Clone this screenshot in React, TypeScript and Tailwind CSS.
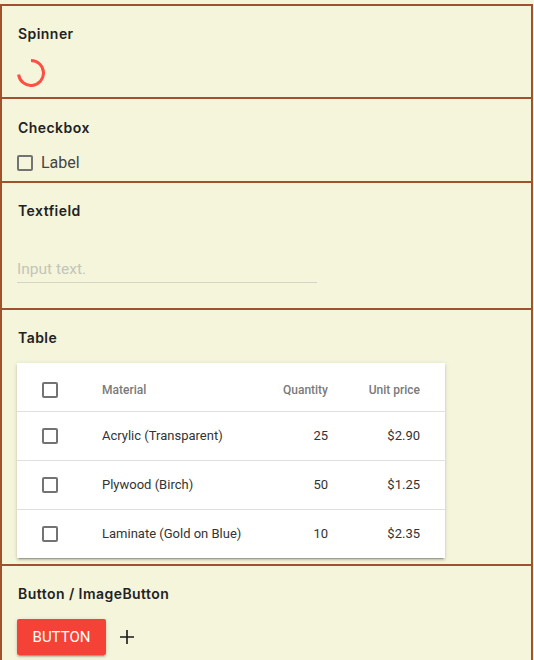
import React from 'react';

const titleFont = { fontFamily: 'Inter, "Noto Sans", sans-serif' };
const bodyFont = { fontFamily: 'Roboto, "Liberation Sans", sans-serif' };

const Box = () => (
  <span className="block w-4 h-4 shrink-0 rounded-[2px] border-2 border-[#737373]" />
);

const Title = ({ children }: { children: React.ReactNode }) => (
  <h3 style={titleFont} className="text-[14px] leading-[20px] font-semibold tracking-[0.45px] text-[#222] pl-px">
    {children}
  </h3>
);

const rows = [
  { material: 'Acrylic (Transparent)', qty: 25, price: '$2.90' },
  { material: 'Plywood (Birch)', qty: 50, price: '$1.25' },
  { material: 'Laminate (Gold on Blue)', qty: 10, price: '$2.35' },
];

export default function App() {
  return (
    <div className="min-h-screen bg-[#f5f5dc] pt-[4px]" style={bodyFont}>
      <div className="w-[533px] border-x-2 border-t-2 border-[#a0522d]">
        {/* Spinner */}
        <section className="h-[93px] border-b-2 border-[#a0522d] px-[15px] pt-[18px]">
          <Title>Spinner</Title>
          <svg className="mt-[15px] block" width="28" height="28" viewBox="0 0 28 28">
            <path
              d="M 14 1.5 A 12.5 12.5 0 1 1 1.6 15.5"
              fill="none"
              stroke="#ff4f44"
              strokeWidth="3"
            />
          </svg>
        </section>

        {/* Checkbox */}
        <section className="h-[84px] border-b-2 border-[#a0522d] px-[15px] pt-[19px]">
          <Title>Checkbox</Title>
          <label className="mt-[15px] flex items-center gap-2 h-5">
            <Box />
            <span className="text-[16px] text-[#444]">Label</span>
          </label>
        </section>

        {/* Textfield */}
        <section className="h-[127px] border-b-2 border-[#a0522d] px-[15px] pt-[18px]">
          <Title>Textfield</Title>
          <input
            placeholder="Input text."
            className="mt-[38px] block w-[300px] h-[24px] pb-[3px] leading-[20px] text-[15.5px] bg-transparent border-b border-[#d5d5c6] outline-none placeholder:text-[#c4c4b8]"
          />
        </section>

        {/* Table */}
        <section className="h-[256px] border-b-2 border-[#a0522d] px-[15px] pt-[18px]">
          <Title>Table</Title>
          <div className="mt-[15px] w-[428px] bg-white shadow-[0_2px_2px_rgba(0,0,0,0.14),0_3px_1px_-2px_rgba(0,0,0,0.2),0_1px_5px_rgba(0,0,0,0.12)]">
            <div className="flex items-center h-[48px] pt-[6px] px-[25px] text-[12px] font-medium text-[#7a7a7a]">
              <Box />
              <span className="ml-[44px] flex-1">Material</span>
              <span className="text-right">Quantity</span>
              <span className="w-[92px] text-right">Unit price</span>
            </div>
            {rows.map((r) => (
              <div
                key={r.material}
                className="flex items-center h-[49px] border-t border-[#e0e0e0] px-[25px] text-[13px] text-[#333]"
              >
                <Box />
                <span className="ml-[44px] flex-1">{r.material}</span>
                <span className="text-right">{r.qty}</span>
                <span className="w-[92px] text-right">{r.price}</span>
              </div>
            ))}
          </div>
        </section>

        {/* Button / ImageButton */}
        <section className="h-[120px] px-[15px] pt-[18px]">
          <Title>Button / ImageButton</Title>
          <div className="mt-[15px] flex items-center gap-[13px]">
            <button className="h-[36px] w-[89px] rounded-[2px] bg-[#f44336] text-white text-[15px] uppercase shadow-[0_2px_2px_rgba(0,0,0,0.14),0_3px_1px_-2px_rgba(0,0,0,0.2),0_1px_5px_rgba(0,0,0,0.12)]">
              Button
            </button>
            <svg width="16" height="16" viewBox="0 0 16 16" className="block">
              <path d="M8 1v14M1 8h14" stroke="#1a1a1a" strokeWidth="1.6" />
            </svg>
          </div>
        </section>
      </div>
    </div>
  );
}
